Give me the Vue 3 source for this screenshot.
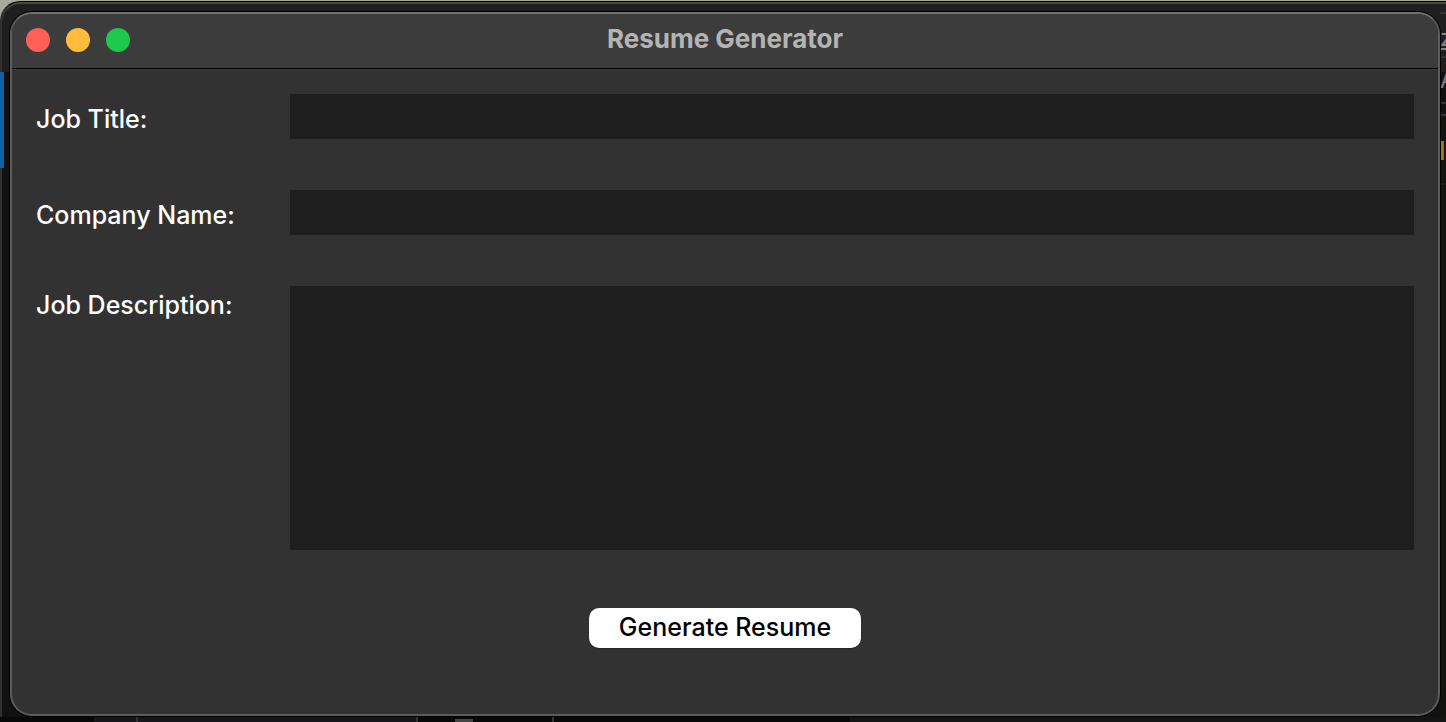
<script setup>
import { ref } from 'vue'

const jobTitle = ref('')
const company = ref('')
const description = ref('')
</script>

<template>
  <div class="desktop">
    <div class="backdrop" aria-hidden="true">
      <span class="activity"></span>
      <span class="gutter">
        <i class="rule r1"></i><i class="rule r2"></i><i class="rule r3"></i><i class="rule r4"></i><i class="rule r5"></i>
        <span class="peek link">z</span>
        <span class="peek tab">A</span>
        <span class="peek code">d</span>
      </span>
      <span class="footer-strip"><i class="panel"></i><i class="tick t1"></i><i class="tick t2"></i><i class="thumb"></i><i class="tick t3"></i></span>
    </div>
    <main class="window">
      <header class="titlebar">
        <div class="lights">
          <button type="button" class="light close" aria-label="Close"></button>
          <button type="button" class="light minimize" aria-label="Minimize"></button>
          <button type="button" class="light zoom" aria-label="Zoom"></button>
        </div>
        <h1>Resume Generator</h1>
      </header>
      <form class="form" @submit.prevent>
        <label for="job-title">Job Title:</label>
        <input id="job-title" v-model="jobTitle" type="text" />
        <label for="company">Company Name:</label>
        <input id="company" v-model="company" type="text" />
        <label class="top" for="description">Job Description:</label>
        <textarea id="description" v-model="description"></textarea>
        <button class="submit" type="submit">Generate Resume</button>
      </form>
    </main>
  </div>
</template>

<style>
body {
  background: #a9aa9e;
}
</style>

<style scoped>
.desktop {
  position: relative;
  box-sizing: border-box;
  min-height: 100vh;
  display: flex;
  padding: 12px 6px 6px 10px;
  overflow: hidden;
  font-family: Inter, "Liberation Sans", sans-serif;
}
.backdrop {
  position: absolute;
  inset: 1px 0 0;
  background: linear-gradient(#1e1f1e 0 70px, #111 70px);
  border-left: 2px solid #303030;
  border-top: 1px solid #050505;
  border-top-left-radius: 20px;
  box-shadow: inset 0 2px #484a47;
}
.activity {
  position: absolute;
  left: -2px;
  top: 70px;
  width: 4px;
  height: 96px;
  background: #0d61a5;
}
.gutter {
  position: absolute;
  right: 0;
  top: -2px;
  bottom: 0;
  width: 6px;
  overflow: hidden;
  background: linear-gradient(transparent 114px, #12120f 114px);
}
.peek {
  position: absolute;
  left: 0;
  font-size: 24px;
  line-height: 24px;
}
.link {
  top: 26px;
  color: #858585;
  text-decoration: underline;
}
.tab {
  top: 68px;
  color: #7c7c7c;
}
.code {
  top: 140px;
  left: -9px;
  color: #9a7a14;
  font-family: "DejaVu Sans Mono", monospace;
  font-weight: 700;
}
.rule {
  position: absolute;
  left: 0;
  width: 6px;
  height: 2px;
  background: #333;
}
.r1 { top: 12px; }
.r2 { top: 56px; }
.r3 { top: 102px; }
.r4 { top: 114px; }
.r5 { top: 183px; background: #1d1d1c; }
.footer-strip {
  position: absolute;
  left: -2px;
  right: 0;
  bottom: 0;
  height: 5px;
  background: linear-gradient(90deg, #080808 850px, #141414 850px);
}
.footer-strip i {
  position: absolute;
  top: 0;
  height: 5px;
}
.panel { left: 94px; width: 322px; background: #17171a; }
.tick { width: 2px; background: #333; }
.t1 { left: 136px; }
.t2 { left: 416px; }
.t3 { left: 552px; }
.footer-strip .thumb { left: 455px; top: 2px; width: 18px; height: 3px; background: #444; }
.window {
  position: relative;
  flex: 1;
  display: flex;
  flex-direction: column;
  overflow: hidden;
  border: 2px solid #5c5c5c;
  border-top-color: #72736f;
  border-radius: 22px;
  background: #323232;
  box-shadow: 0 0 0 1px #000;
}
.titlebar {
  display: grid;
  grid-template-columns: 1fr auto 1fr;
  align-items: center;
  height: 52px;
  padding-bottom: 2px;
  border-bottom: 1px solid #000;
  background: #3c3c3c;
  box-shadow: 0 1px #3a3a3a;
}
.lights {
  display: flex;
  gap: 16px;
  padding-left: 14px;
}
.light {
  width: 24px;
  height: 24px;
  padding: 0;
  border: 0;
  border-radius: 50%;
}
.close { background: #ff5f57; }
.minimize { background: #ffbc3c; }
.zoom { background: #1ec94c; }
h1 {
  margin: 0;
  padding-bottom: 2px;
  color: #b4b4b4;
  font-size: 26px;
  line-height: 32px;
  font-weight: 700;
}
.form {
  display: grid;
  grid-template-columns: 254px minmax(0, 1fr);
  row-gap: 51px;
  padding: 25px 24px 24px;
}
label {
  align-self: center;
  padding-top: 4px;
  color: #fff;
  font-size: 25px;
  line-height: 32px;
  font-weight: 500;
}
label.top {
  align-self: start;
  padding-top: 3px;
}
input,
textarea {
  box-sizing: border-box;
  width: 100%;
  margin: 0;
  padding: 6px 8px;
  border: 0;
  border-radius: 0;
  outline: 0;
  background: #1e1e1e;
  color: #fff;
  font: inherit;
  font-size: 25px;
}
input {
  height: 45px;
}
textarea {
  display: block;
  height: 264px;
  resize: none;
}
.submit {
  grid-column: 1 / -1;
  justify-self: center;
  margin-top: 7px;
  padding: 0 30px 2px;
  border: 0;
  border-radius: 10px;
  background: #fff;
  box-shadow: 0 1px 2px rgba(0, 0, 0, 0.3);
  color: #000;
  font-family: inherit;
  font-size: 25px;
  font-weight: 500;
  line-height: 38px;
}
</style>
